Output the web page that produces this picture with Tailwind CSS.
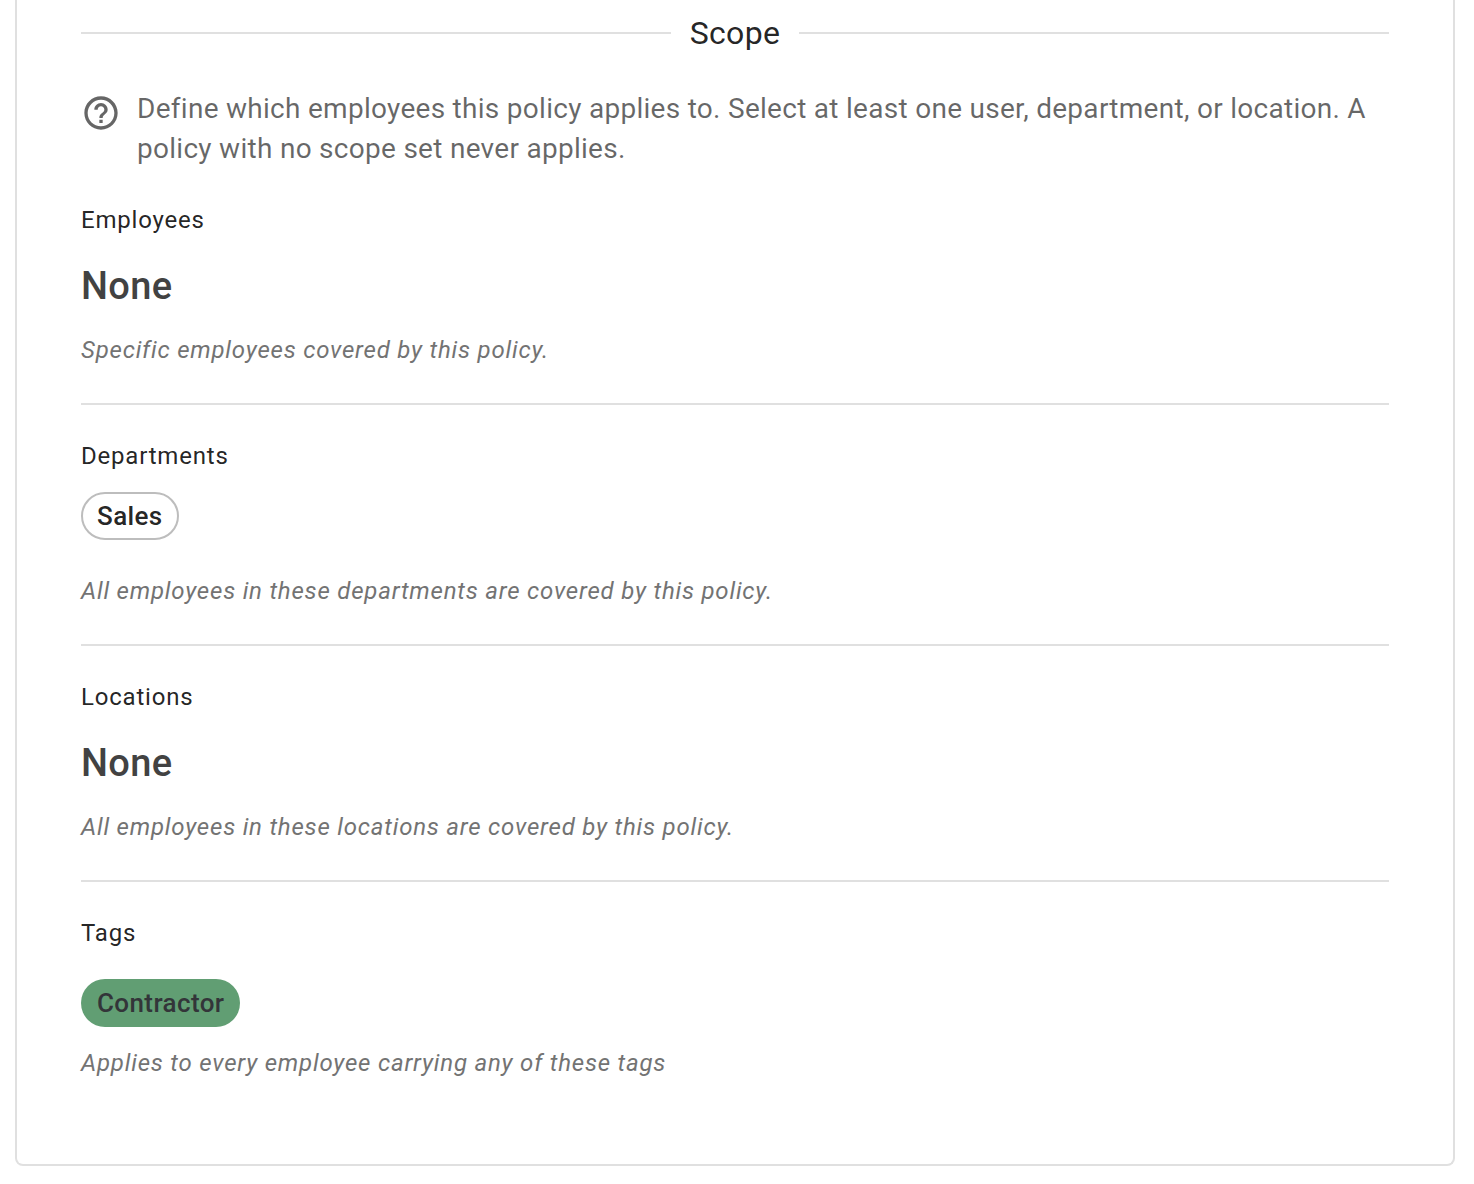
<!DOCTYPE html>
<html lang="en">
  <head>
    <meta charset="UTF-8" />
    <meta name="viewport" content="width=device-width, initial-scale=1.0" />
    <title>Policy scope</title>
    <script src="https://cdn.jsdelivr.net/npm/@tailwindcss/browser@4"></script>
  </head>
  <body class="bg-white font-[Roboto,sans-serif] text-black/87">
    <main class="mr-[19px] ml-[15px] rounded-b-lg border-2 border-t-0 border-[#e0e0e0] px-16 pt-[9px] pb-[81px]">
      <!-- Section title -->
      <div class="flex items-center gap-[19px]">
        <div class="h-[2px] flex-1 bg-[#e0e0e0]"></div>
        <h2 class="text-[32px] leading-12 tracking-[0.01em]">Scope</h2>
        <div class="h-[2px] flex-1 bg-[#e0e0e0]"></div>
      </div>

      <!-- Help text -->
      <div class="mt-8 flex gap-4 text-black/60">
        <svg class="mt-1 size-10 shrink-0" viewBox="0 0 24 24" fill="currentColor" aria-hidden="true">
          <path d="M11 18h2v-2h-2v2zm1-16C6.480 2 2 6.480 2 12s4.480 10 10 10 10-4.480 10-10S17.520 2 12 2zm0 18c-4.410 0-8-3.590-8-8s3.590-8 8-8 8 3.590 8 8-3.590 8-8 8zm0-14c-2.210 0-4 1.790-4 4h2c0-1.100.9-2 2-2s2 .9 2 2c0 2-3 1.750-3 5h2c0-2.250 3-2.500 3-5 0-2.210-1.790-4-4-4z" />
        </svg>
        <p class="text-[28px] leading-10 tracking-[0.01em]">
          Define which employees this policy applies to. Select at least one
          user, department, or location. A policy with no scope set never
          applies.
        </p>
      </div>

      <!-- Employees -->
      <section class="border-b-2 border-[#e0e0e0] pt-[31px] pb-[33px]">
        <h3 class="text-2xl leading-10 tracking-[0.0333em]">Employees</h3>
        <p class="mt-5 text-[38px] leading-[52px] font-medium tracking-[0.01em] text-[#424242]">None</p>
        <p class="mt-[18px] text-2xl leading-10 tracking-[0.0333em] text-[#737373] italic">
          Specific employees covered by this policy.
        </p>
      </section>

      <!-- Departments -->
      <section class="border-b-2 border-[#e0e0e0] pt-[31px] pb-[33px]">
        <h3 class="text-2xl leading-10 tracking-[0.0333em]">Departments</h3>
        <div class="mt-4 flex">
          <span class="rounded-full border-2 border-[#bdbdbd] px-[14px] text-[26px] leading-11 font-medium tracking-[0.015em]">Sales</span>
        </div>
        <p class="mt-[31px] text-2xl leading-10 tracking-[0.0333em] text-[#737373] italic">
          All employees in these departments are covered by this policy.
        </p>
      </section>

      <!-- Locations -->
      <section class="border-b-2 border-[#e0e0e0] pt-[31px] pb-[33px]">
        <h3 class="text-2xl leading-10 tracking-[0.0333em]">Locations</h3>
        <p class="mt-5 text-[38px] leading-[52px] font-medium tracking-[0.01em] text-[#424242]">None</p>
        <p class="mt-[18px] text-2xl leading-10 tracking-[0.0333em] text-[#737373] italic">
          All employees in these locations are covered by this policy.
        </p>
      </section>

      <!-- Tags -->
      <section class="pt-[31px]">
        <h3 class="text-2xl leading-10 tracking-[0.0333em]">Tags</h3>
        <div class="mt-[26px] flex">
          <span class="rounded-full bg-[#619e73] px-4 text-[26px] leading-12 font-medium tracking-[0.015em] text-[#333539]">Contractor</span>
        </div>
        <p class="mt-4 text-2xl leading-10 tracking-[0.0333em] text-[#737373] italic">
          Applies to every employee carrying any of these tags
        </p>
      </section>
    </main>
  </body>
</html>
